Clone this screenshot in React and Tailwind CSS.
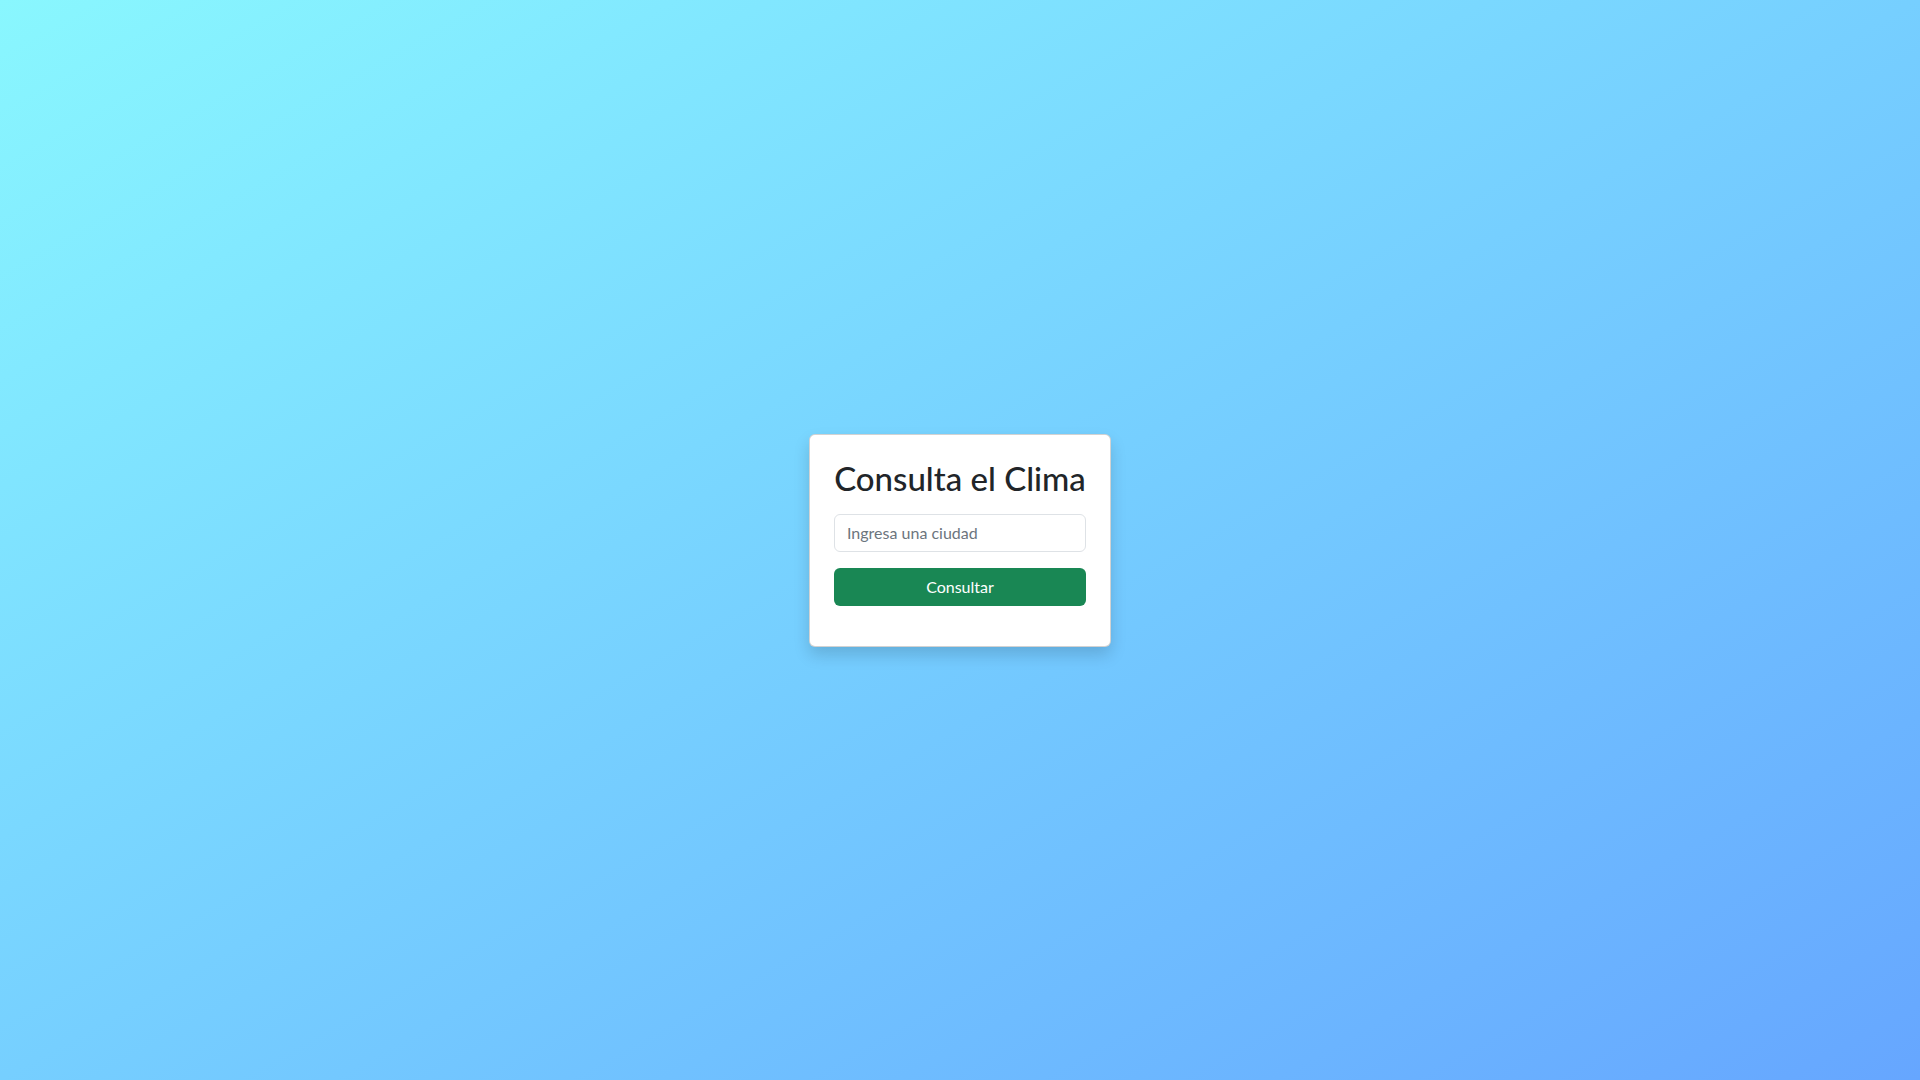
import React, { useState } from "react";

function App() {
    const [city, setCity] = useState("");

    return (
        <div className="min-h-screen w-full flex items-center justify-center bg-gradient-to-br from-[#89f7fe] to-[#66a6ff] font-['Segoe_UI','Lato','Noto_Sans',sans-serif] text-[#212529]">
            <div className="w-[302px] bg-white border border-black/[0.175] rounded-[6px] p-6 shadow-[0_8px_16px_rgba(0,0,0,0.15)]">
                <h2 className="text-[33px] leading-[39px] font-medium text-center mb-4 whitespace-nowrap">Consulta el Clima</h2>
                <input
                    type="text"
                    value={city}
                    onChange={(e) => setCity(e.target.value)}
                    placeholder="Ingresa una ciudad"
                    className="block w-full h-[38px] px-3 py-1.5 text-base leading-6 border border-[#dee2e6] rounded-[6px] placeholder:text-[#6c757d] outline-none mb-4"
                />
                <button className="block w-full h-[38px] px-3 py-1.5 text-base leading-6 text-white bg-[#198754] rounded-[6px] mb-4">
                    Consultar
                </button>
            </div>
        </div>
    );
}

export default App;
